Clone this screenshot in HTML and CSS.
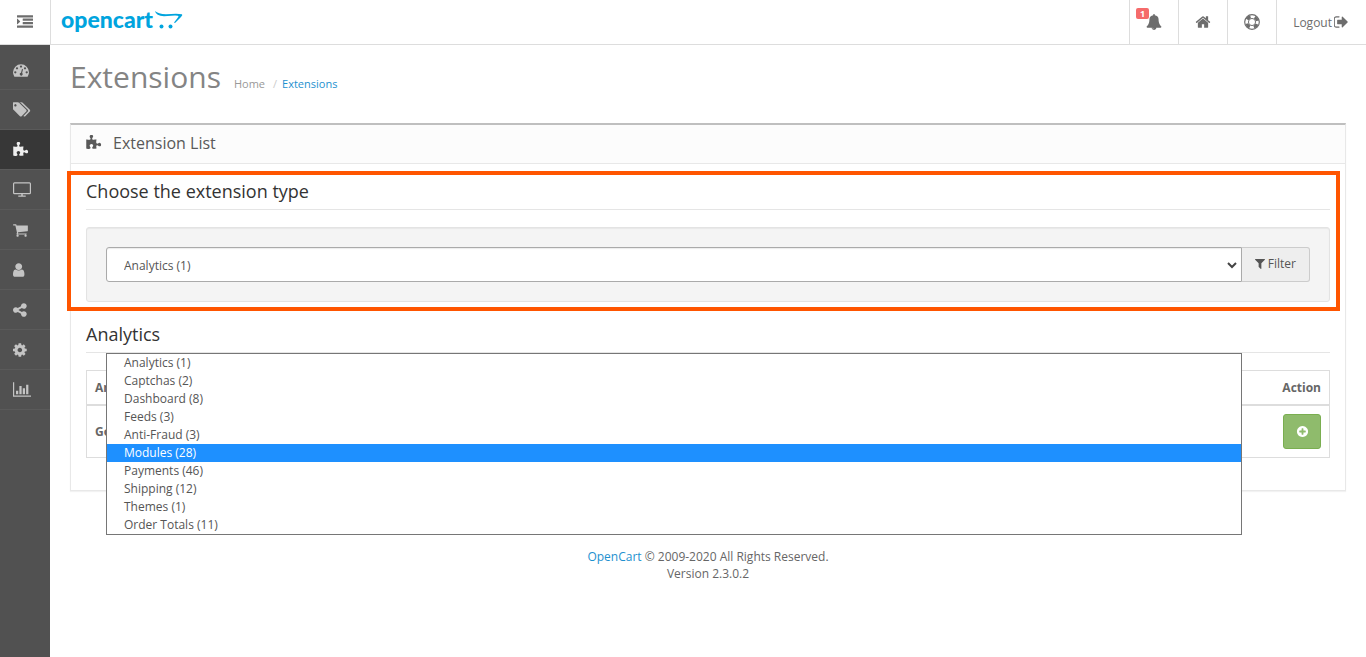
FILE: index.html
```html
<!DOCTYPE html>
<html lang="en">
<head>
  <meta charset="UTF-8">
  <title>Extensions</title>
  <meta name="viewport" content="width=device-width, initial-scale=1.0">
  <link rel="stylesheet" href="styles.css">
</head>
<body>
  <!-- Shared icon shapes -->
  <svg class="sprite" aria-hidden="true">
    <symbol id="puzzle" viewBox="64 0 1792 1792"><path d="M1755 1083q0 81-44.5 135t-123.5 54q-41 0-77.5-17.5t-59-38-56.5-38-71-17.5q-110 0-110 124 0 39 16 115t15 115v5q-22 0-33 1-34 3-97.5 11.5t-115.5 13.5-98 5q-61 0-103-26.5t-42-83.5q0-37 17.5-71t38-56.5 38-59 17.5-77.5q0-79-54-123.5t-135-44.5q-84 0-143 45.5t-59 127.5q0 43 15 83t33.5 64.5 33.5 53 15 50.5q0 45-46 89-37 35-117 35-95 0-245-24-9-2-27.5-4t-27.5-4l-13-2q-1 0-3-1-2 0-2-1v-1024q2 1 17.5 3.5t34 5 21.5 3.5q150 24 245 24 80 0 117-35 46-44 46-89 0-22-15-50.5t-33.5-53-33.5-64.5-15-83q0-82 59-127.5t144-45.5q80 0 134 44.5t54 123.5q0 41-17.5 77.5t-38 59-38 56.5-17.5 71q0 57 42 83.5t103 26.5q64 0 180-15t163-17v2q-1 2-3.5 17.5t-5 34-3.5 21.5q-24 150-24 245 0 80 35 117 44 46 89 46 22 0 50.5-15t53-33.5 64.5-33.5 83-15q82 0 127.5 59t45.5 143z"/></symbol>
  </svg>

  <header class="topbar">
    <button type="button" class="menu-toggle" aria-label="Toggle menu">
      <svg class="icon" viewBox="0 0 1792 1792"><path d="M352 832q0 14-9 23l-288 288q-9 9-23 9-13 0-22.5-9.5t-9.5-22.5v-576q0-13 9.5-22.5t22.5-9.5q14 0 23 9l288 288q9 9 9 23zM32 1280h1728q32 0 32 32v192q0 32-32 32h-1728q-32 0-32-32v-192q0-32 32-32zM672 896h1088q32 0 32 32v192q0 32-32 32h-1088q-32 0-32-32v-192q0-32 32-32zM672 512h1088q32 0 32 32v192q0 32-32 32h-1088q-32 0-32-32v-192q0-32 32-32zM32 128h1728q32 0 32 32v192q0 32-32 32h-1728q-32 0-32-32v-192q0-32 32-32z"/></svg>
    </button>
    <a href="#" class="logo" aria-label="opencart">
      <span class="logo-text">opencart</span>
      <svg class="logo-cart" width="28" height="20" viewBox="0 0 28 20"><path d="M0 0Q3 3 11 3.300Q22 2.500 27 3.200Q28 4 26 6L20 12L19 11.500Q22 8 23.500 5.500Q23.500 4.600 20 4.600L9 5.200Q1 5 0 0z"/><circle cx="6.500" cy="15.500" r="2"/><circle cx="15.500" cy="15.500" r="2"/></svg>
    </a>
    <nav class="top-links">
      <a href="#" class="top-link alerts" aria-label="Notifications">
        <span class="badge">1</span>
        <svg class="icon" viewBox="0 0 1792 1792"><path d="M912 1696q0-16-16-16-59 0-101.5-42.5t-42.5-101.5q0-16-16-16t-16 16q0 73 51.5 124.5t124.5 51.5q16 0 16-16zm816-288q0 52-38 90t-90 38h-448q0 106-75 181t-181 75-181-75-75-181h-448q-52 0-90-38t-38-90q50-42 91-88t85-119.5 74.5-158.5 50-206 19.5-260q0-152 117-282.5t307-158.5q-8-19-8-39 0-40 28-68t68-28 68 28 28 68q0 20-8 39 190 28 307 158.5t117 282.5q0 139 19.5 260t50 206 74.5 158.5 85 119.5 91 88z"/></svg>
      </a>
      <a href="#" class="top-link" aria-label="Store front">
        <svg class="icon" viewBox="0 0 1792 1792"><path d="M1472 992v480q0 26-19 45t-45 19h-384v-384h-256v384h-384q-26 0-45-19t-19-45v-480q0-1 .5-3t.5-3l575-474 575 474q1 2 1 6zm223-69l-62 74q-8 9-21 11h-3q-13 0-21-7l-692-577-692 577q-12 8-24 7-13-2-21-11l-62-74q-8-10-7-23.5t11-21.5l719-599q32-26 76-26t76 26l244 204v-195q0-14 9-23t23-9h192q14 0 23 9t9 23v408l219 182q10 8 11 21.5t-7 23.5z"/></svg>
      </a>
      <a href="#" class="top-link" aria-label="Help">
        <svg class="icon" viewBox="0 0 1792 1792"><g fill="none" stroke="currentColor"><circle cx="896" cy="896" r="820" stroke-width="130"/><circle cx="896" cy="896" r="400" stroke-width="110"/><circle cx="896" cy="896" r="610" stroke-width="350" stroke-dasharray="479 479" stroke-dashoffset="719"/></g></svg>
      </a>
      <a href="#" class="top-link logout">Logout
        <svg class="icon" viewBox="96 0 1792 1792"><path d="M704 1440q0 4 1 20t.5 26.500-3 23.500-10 19.500-20.500 6.500h-320q-119 0-203.500-84.500t-84.500-203.500v-704q0-119 84.500-203.500t203.500-84.500h320q13 0 22.500 9.500t9.500 22.500q0 4 1 20t.5 26.500-3 23.500-10 19.500-20.500 6.500h-320q-66 0-113 47t-47 113v704q0 66 47 113t113 47h312l11.500 1 11.500 3 8 5.500 7 9 2 13.500zm928-544q0 26-19 45l-544 544q-19 19-45 19t-45-19-19-45v-288h-448q-26 0-45-19t-19-45v-384q0-26 19-45t45-19h448v-288q0-26 19-45t45-19 45 19l544 544q19 19 19 45z"/></svg>
      </a>
    </nav>
  </header>

  <div class="layout">
    <nav class="sidebar" aria-label="Main menu">
      <a href="#" aria-label="Dashboard"><svg class="icon" viewBox="0 0 1792 1792"><path fill-rule="evenodd" d="M0 1152a896 896 0 0 1 1792 0q0 261-141 483-19 29-54 29H195q-35 0-54-29Q0 1413 0 1152zM128 1152a128 128 0 1 0 256 0 128 128 0 1 0-256 0zM320 704a128 128 0 1 0 256 0 128 128 0 1 0-256 0zM768 512a128 128 0 1 0 256 0 128 128 0 1 0-256 0zM1216 704a128 128 0 1 0 256 0 128 128 0 1 0-256 0zM1408 1152a128 128 0 1 0 256 0 128 128 0 1 0-256 0zM1060 787q-40-15-60 30l-101 382q-100 8-140 100-30 110 50 190 90 70 190 20 110-65 90-180-15-70-70-105l101-382q0-40-60-55z"/></svg></a>
      <a href="#" aria-label="Catalog"><svg class="icon wide" viewBox="0 0 1920 1792"><path fill-rule="evenodd" d="M384 448q0-53-37.500-90.500t-90.500-37.500-90.500 37.500-37.500 90.500 37.500 90.500 90.500 37.500 90.500-37.500 37.500-90.500zm1067 576q0 53-37 90l-491 492q-39 37-91 37-53 0-90-37l-715-716q-38-37-64.500-101t-26.500-117v-416q0-52 38-90t90-38h416q53 0 117 26.500t102 64.500l715 714q37 39 37 91zm384 0q0 53-37 90l-491 492q-39 37-91 37-36 0-59-14t-53-45l470-470q37-37 37-90 0-52-37-91l-715-714q-38-38-102-64.500t-117-26.500h224q53 0 117 26.500t102 64.500l715 714q37 39 37 91z"/></svg></a>
      <a href="#" class="active" aria-label="Extensions"><svg class="icon"><use href="#puzzle"/></svg></a>
      <a href="#" aria-label="Design"><svg class="icon wide" viewBox="0 0 1920 1792"><path fill-rule="evenodd" d="M160 128h1600q160 0 160 160v960q0 160-160 160h-720v128h290q30 0 30 30v70q0 28-30 28H590q-30 0-30-28v-70q0-30 30-30h290v-128H160Q0 1408 0 1248V288Q0 128 160 128zM160 256q-32 0-32 32v960q0 32 32 32h1600q32 0 32-32V288q0-32-32-32z"/></svg></a>
      <a href="#" aria-label="Sales"><svg class="icon" viewBox="64 0 1792 1792"><path d="M704 1536q0 52-38 90t-90 38-90-38-38-90 38-90 90-38 90 38 38 90zm896 0q0 52-38 90t-90 38-90-38-38-90 38-90 90-38 90 38 38 90zm128-1088v512q0 24-16.500 42.500t-40.500 21.500l-1044 122q13 60 13 70 0 16-24 64h920q26 0 45 19t19 45-19 45-45 19h-1024q-26 0-45-19t-19-45q0-11 8-31.500t16-36 21.500-40 15.500-29.500l-177-823h-204q-26 0-45-19t-19-45 19-45 45-19h256q16 0 28.500 6.500t19.500 15.500 13 24.500 8 26 5.500 29.500 4.500 26h1201q26 0 45 19t19 45z"/></svg></a>
      <a href="#" aria-label="Customers"><svg class="icon" viewBox="256 0 1792 1792"><path d="M1536 1399q0 109-62.500 187t-150.500 78h-854q-88 0-150.500-78t-62.500-187q0-85 8.500-160.500t31.500-152 58.500-131 94-89 134.500-34.500q131 128 313 128t313-128q76 0 134.500 34.500t94 89 58.500 131 31.500 152 8.500 160.500zm-256-887q0 159-112.500 271.500t-271.500 112.500-271.500-112.500-112.500-271.500 112.500-271.500 271.500-112.500 271.500 112.500 112.500 271.500z"/></svg></a>
      <a href="#" aria-label="Marketing"><svg class="icon" viewBox="128 0 1792 1792"><path d="M1344 1024q133 0 226.500 93.500t93.500 226.500-93.500 226.500-226.500 93.500-226.500-93.500-93.500-226.500q0-12 2-34l-360-180q-92 86-218 86-133 0-226.500-93.500t-93.500-226.500 93.500-226.500 226.500-93.500q126 0 218 86l360-180q-2-22-2-34 0-133 93.500-226.500t226.500-93.500 226.500 93.500 93.500 226.500-93.500 226.500-226.500 93.500q-126 0-218-86l-360 180q2 22 2 34t-2 34l360 180q92-86 218-86z"/></svg></a>
      <a href="#" aria-label="System"><svg class="icon" viewBox="128 0 1792 1792"><path fill-rule="evenodd" d="M1152 896q0-106-75-181t-181-75-181 75-75 181 75 181 181 75 181-75 75-181zm512-109v222q0 12-8 23t-20 13l-185 28q-19 54-39 91 35 50 107 138 10 12 10 25t-9 23q-27 37-99 108t-94 71q-12 0-26-9l-138-108q-44 23-91 38-16 136-29 186-7 28-36 28h-222q-14 0-24.500-8.500t-11.500-21.500l-28-184q-49-16-90-37l-141 107q-10 9-25 9-14 0-25-11-126-114-165-168-7-10-7-23 0-12 8-23 15-21 51-66.500t54-70.500q-27-50-41-99l-183-27q-13-2-21-12.500t-8-23.500v-222q0-12 8-23t19-13l186-28q14-46 39-92-40-57-107-138-10-12-10-24 0-10 9-23 26-36 98.500-107.500t94.500-71.500q13 0 26 10l138 107q44-23 91-38 16-136 29-186 7-28 36-28h222q14 0 24.500 8.500t11.500 21.500l28 184q49 16 90 37l142-107q9-9 24-9 13 0 25 10 129 119 165 170 7 8 7 22 0 12-8 23-15 21-51 66.500t-54 70.500q26 50 41 98l183 28q13 2 21 12.500t8 23.500z"/></svg></a>
      <a href="#" aria-label="Reports"><svg class="icon wide" viewBox="0 0 1920 1792"><path d="M0 128h128v1408h1792v128H0zM320 1024h240v384H320zM680 512h240v896H680zM1040 768h240v640h-240zM1400 384h240v1024h-240z"/></svg></a>
    </nav>

    <div class="page">
      <main class="content">
        <div class="page-header">
          <h1>Extensions</h1>
          <ol class="breadcrumb">
            <li><a href="#">Home</a></li>
            <li><a href="#" class="current">Extensions</a></li>
          </ol>
        </div>

        <div class="panel">
          <div class="panel-heading">
            <svg class="icon"><use href="#puzzle"/></svg>
            <h2>Extension List</h2>
          </div>
          <div class="panel-body">
            <section class="chooser">
              <h3><label for="type">Choose the extension type</label></h3>
              <div class="well">
                <div class="input-group">
                  <div class="select-wrap">
                    <select id="type">
                      <option>Analytics (1)</option>
                      <option>Captchas (2)</option>
                      <option>Dashboard (8)</option>
                      <option>Feeds (3)</option>
                      <option>Anti-Fraud (3)</option>
                      <option>Modules (28)</option>
                      <option>Payments (46)</option>
                      <option>Shipping (12)</option>
                      <option>Themes (1)</option>
                      <option>Order Totals (11)</option>
                    </select>
                    <svg class="chevron" width="10" height="7" viewBox="0 0 10 7"><path d="M1 1l4 4 4-4" fill="none" stroke="currentColor" stroke-width="2"/></svg>
                    <ul class="options" role="listbox" aria-label="Extension types">
                      <li role="option">Analytics (1)</li>
                      <li role="option">Captchas (2)</li>
                      <li role="option">Dashboard (8)</li>
                      <li role="option">Feeds (3)</li>
                      <li role="option">Anti-Fraud (3)</li>
                      <li role="option" class="hover" aria-selected="true">Modules (28)</li>
                      <li role="option">Payments (46)</li>
                      <li role="option">Shipping (12)</li>
                      <li role="option">Themes (1)</li>
                      <li role="option">Order Totals (11)</li>
                    </ul>
                  </div>
                  <button type="button" class="btn-filter"><svg class="icon-sm" viewBox="192 0 1408 1792"><path d="M1595 295q17 41-14 70l-493 493v742q0 42-39 59-13 5-25 5-27 0-45-19l-256-256q-19-19-19-45v-486l-493-493q-31-29-14-70 17-39 59-39h1280q42 0 59 39z"/></svg>Filter</button>
                </div>
              </div>
            </section>

            <section>
              <h3>Analytics</h3>
              <table>
                <thead>
                  <tr><th>Analytics Name</th><th>Status</th><th class="right">Action</th></tr>
                </thead>
                <tbody>
                  <tr>
                    <td><b>Google Analytics</b></td>
                    <td></td>
                    <td class="right"><button type="button" class="btn-install" aria-label="Install"><svg class="plus" viewBox="0 0 1792 1792"><path fill-rule="evenodd" d="M1344 960v-128q0-26-19-45t-45-19h-256v-256q0-26-19-45t-45-19h-128q-26 0-45 19t-19 45v256h-256q-26 0-45 19t-19 45v128q0 26 19 45t45 19h256v256q0 26 19 45t45 19h128q26 0 45-19t19-45v-256h256q26 0 45-19t19-45zm320-64q0 209-103 385.500t-279.500 279.500-385.500 103-385.500-103-279.500-279.500-103-385.500 103-385.500 279.500-279.500 385.500-103 385.500 103 279.500 279.500 103 385.500z"/></svg></button></td>
                  </tr>
                </tbody>
              </table>
            </section>
          </div>
        </div>
      </main>

      <footer>
        <p><a href="#">OpenCart</a> © 2009-2020 All Rights Reserved.</p>
        <p>Version 2.3.0.2</p>
      </footer>
    </div>
  </div>
</body>
</html>
```

FILE: styles.css
```css
:root {
  --text: #666;
  --dark: #333;
  --link: #1e91cf;
  --line: #e5e5e5;
  --side: #515151;
  --mark: #ff5500;
}

* {
  margin: 0;
  padding: 0;
  box-sizing: border-box;
}

body {
  display: flex;
  flex-direction: column;
  min-height: 100vh;
  background: #fff;
  color: var(--text);
  font-family: "Open Sans", sans-serif;
  font-size: 12px;
  line-height: 17px;
}

a {
  color: var(--link);
  text-decoration: none;
}

button {
  font: inherit;
  color: inherit;
  cursor: pointer;
}

.sprite {
  display: none;
}

.icon {
  width: 16px;
  height: 16px;
  fill: currentColor;
  flex: none;
}
.icon.wide {
  width: 18px;
  height: 17px;
}

/* Top bar */
.topbar {
  display: flex;
  height: 45px;
  border-bottom: 1px solid #ddd;
}
.menu-toggle {
  display: flex;
  align-items: center;
  justify-content: center;
  width: 51px;
  background: none;
  border: none;
  border-right: 1px solid #ddd;
  color: #6d6d6d;
}
.logo {
  display: flex;
  align-items: flex-start;
  gap: 2px;
  padding: 6px 10px;
  color: #00a4de;
}
.logo-text {
  font-family: Lato, sans-serif;
  font-size: 23px;
  font-weight: 900;
  line-height: 27px;
}
.logo-cart {
  margin-top: 5px;
  fill: currentColor;
}
.top-links {
  display: flex;
  margin-left: auto;
}
.top-link {
  display: flex;
  align-items: center;
  padding: 0 16px;
  border-left: 1px solid #ddd;
  color: #6d6d6d;
}
.alerts {
  position: relative;
}
.badge {
  position: absolute;
  left: 6px;
  top: 8px;
  width: 13px;
  border-radius: 2px;
  background: #f56b6b;
  color: #fff;
  font-size: 9px;
  font-weight: bold;
  line-height: 11px;
  text-align: center;
}
.logout {
  gap: 2px;
}

/* Side menu */
.layout {
  display: flex;
  flex: 1;
}
.sidebar {
  flex: none;
  width: 50px;
  padding-top: 5px;
  background: var(--side);
}
.sidebar a {
  display: flex;
  align-items: center;
  height: 40px;
  padding-left: 13px;
  border-bottom: 1px solid #5a5a5a;
  color: #c4c4c4;
}
.sidebar a.active {
  background: #373737;
  color: #eee;
}

/* Page */
.page {
  flex: 1;
  min-width: 0;
}
.content {
  padding: 11px 20px 0;
}
.page-header {
  display: flex;
  align-items: baseline;
  gap: 13px;
  margin-bottom: 26px;
}
.page-header h1 {
  color: #848484;
  font-size: 30px;
  font-weight: 400;
  line-height: 41px;
}
.breadcrumb {
  display: flex;
  list-style: none;
  font-size: 11px;
}
.breadcrumb a {
  color: #999;
}
.breadcrumb a.current {
  color: var(--link);
}
.breadcrumb li + li::before {
  content: "/";
  padding: 0 5px 0 8px;
  color: #ccc;
}

.panel {
  border: 1px solid #e8e8e8;
  border-top: 2px solid #bfbfbf;
  box-shadow: 0 1px 1px rgba(0, 0, 0, 0.05);
}
.panel-heading {
  display: flex;
  align-items: center;
  gap: 11px;
  height: 39px;
  padding: 0 15px 2px;
  background: #fcfcfc;
  border-bottom: 1px solid #e8e8e8;
  color: #595959;
}
.panel-heading h2 {
  font-size: 16px;
  font-weight: 400;
}
.panel-body {
  padding: 15px;
}
h3 {
  margin-bottom: 17px;
  padding-bottom: 5px;
  border-bottom: 1px solid var(--line);
  color: var(--dark);
  font-size: 18px;
  font-weight: 400;
  line-height: 25px;
}

/* Framed filter area */
.chooser {
  position: relative;
  margin-bottom: 20px;
}
.chooser::after {
  content: "";
  position: absolute;
  inset: -8px -10px -9px -19px;
  border: 4px solid var(--mark);
  pointer-events: none;
}
.well {
  padding: 19px;
  background: #f4f4f4;
  border: 1px solid #e3e3e3;
  border-radius: 3px;
  box-shadow: inset 0 1px 1px rgba(0, 0, 0, 0.05);
}
.input-group {
  display: flex;
}
.select-wrap {
  position: relative;
  flex: 1;
}
.select-wrap select {
  display: block;
  width: 100%;
  height: 35px;
  padding: 2px 17px 0;
  appearance: none;
  background: #fff;
  border: 1px solid #aaa;
  border-radius: 3px 0 0 3px;
  box-shadow: inset 0 1px 1px rgba(0, 0, 0, 0.08);
  color: #555;
  font: inherit;
}
.chevron {
  position: absolute;
  right: 5px;
  top: 15px;
  color: #444;
  pointer-events: none;
}
.options {
  position: absolute;
  left: 0;
  right: 0;
  top: 106px;
  z-index: 2;
  background: #fff;
  border: 1px solid #767676;
  color: #555;
  line-height: 18px;
  list-style: none;
}
.options li {
  padding: 0 17px;
}
.options .hover {
  background: #1e90ff;
  color: #fff;
}
.btn-filter {
  display: flex;
  align-items: center;
  gap: 3px;
  padding: 0 13px 2px;
  background: #eee;
  border: 1px solid #ccc;
  border-left: none;
  border-radius: 0 3px 3px 0;
  color: #555;
}
.icon-sm {
  width: 10px;
  height: 13px;
  fill: currentColor;
}

/* Extension table */
table {
  width: 100%;
  margin-bottom: 17px;
  border: 1px solid #ddd;
  border-spacing: 0;
}
th,
td {
  padding: 8px;
  text-align: left;
}
th {
  border-bottom: 2px solid #ddd;
}
.right {
  text-align: right;
}
.btn-install {
  display: inline-flex;
  align-items: center;
  justify-content: center;
  width: 38px;
  height: 35px;
  vertical-align: top;
  background: #8fbb6c;
  border: 1px solid #7aae50;
  border-radius: 3px;
  color: #fff;
}
.plus {
  width: 13px;
  height: 13px;
  fill: currentColor;
}

footer {
  padding: 57px 0 30px;
  text-align: center;
}
```
